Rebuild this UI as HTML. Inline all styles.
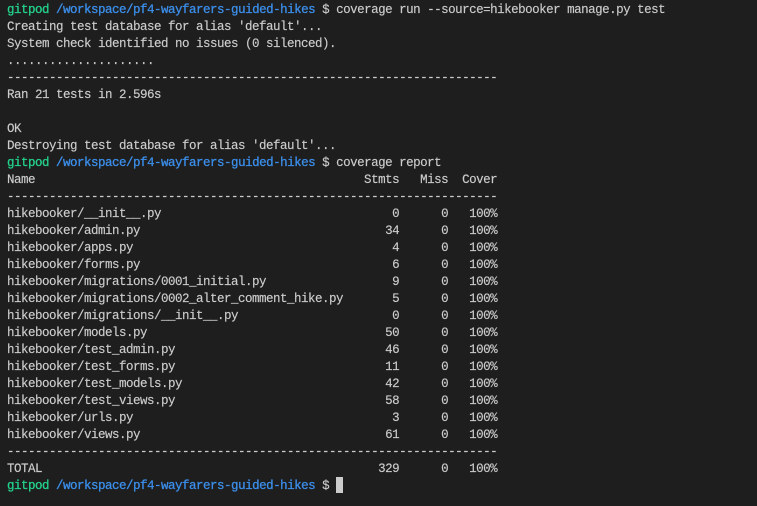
<!DOCTYPE html>
<html>
<head>
<meta charset="utf-8">
<style>
html,body{margin:0;padding:0;width:757px;height:506px;background:#1e1e1e;overflow:hidden}
pre{position:absolute;left:7px;top:2px;margin:0;font-family:"Liberation Mono",monospace;font-size:12.5px;letter-spacing:-0.5px;line-height:17px;color:#cccccc;white-space:pre;-webkit-text-stroke:0.15px currentColor}
.g{color:#23d18b;-webkit-text-stroke:0.3px currentColor}
.b{color:#3b8eea;-webkit-text-stroke:0.3px currentColor}
.cur{position:absolute;left:336px;top:477px;width:7px;height:16px;background:#cccccc}
</style>
</head>
<body>
<pre><span class="g">gitpod</span> <span class="b">/workspace/pf4-wayfarers-guided-hikes</span> $ coverage run --source=hikebooker manage.py test
Creating test database for alias 'default'...
System check identified no issues (0 silenced).
.....................
----------------------------------------------------------------------
Ran 21 tests in 2.596s

OK
Destroying test database for alias 'default'...
<span class="g">gitpod</span> <span class="b">/workspace/pf4-wayfarers-guided-hikes</span> $ coverage report
Name                                               Stmts   Miss  Cover
----------------------------------------------------------------------
hikebooker/__init__.py                                 0      0   100%
hikebooker/admin.py                                   34      0   100%
hikebooker/apps.py                                     4      0   100%
hikebooker/forms.py                                    6      0   100%
hikebooker/migrations/0001_initial.py                  9      0   100%
hikebooker/migrations/0002_alter_comment_hike.py       5      0   100%
hikebooker/migrations/__init__.py                      0      0   100%
hikebooker/models.py                                  50      0   100%
hikebooker/test_admin.py                              46      0   100%
hikebooker/test_forms.py                              11      0   100%
hikebooker/test_models.py                             42      0   100%
hikebooker/test_views.py                              58      0   100%
hikebooker/urls.py                                     3      0   100%
hikebooker/views.py                                   61      0   100%
----------------------------------------------------------------------
TOTAL                                                329      0   100%
<span class="g">gitpod</span> <span class="b">/workspace/pf4-wayfarers-guided-hikes</span> $ </pre>
<div class="cur"></div>
</body>
</html>
